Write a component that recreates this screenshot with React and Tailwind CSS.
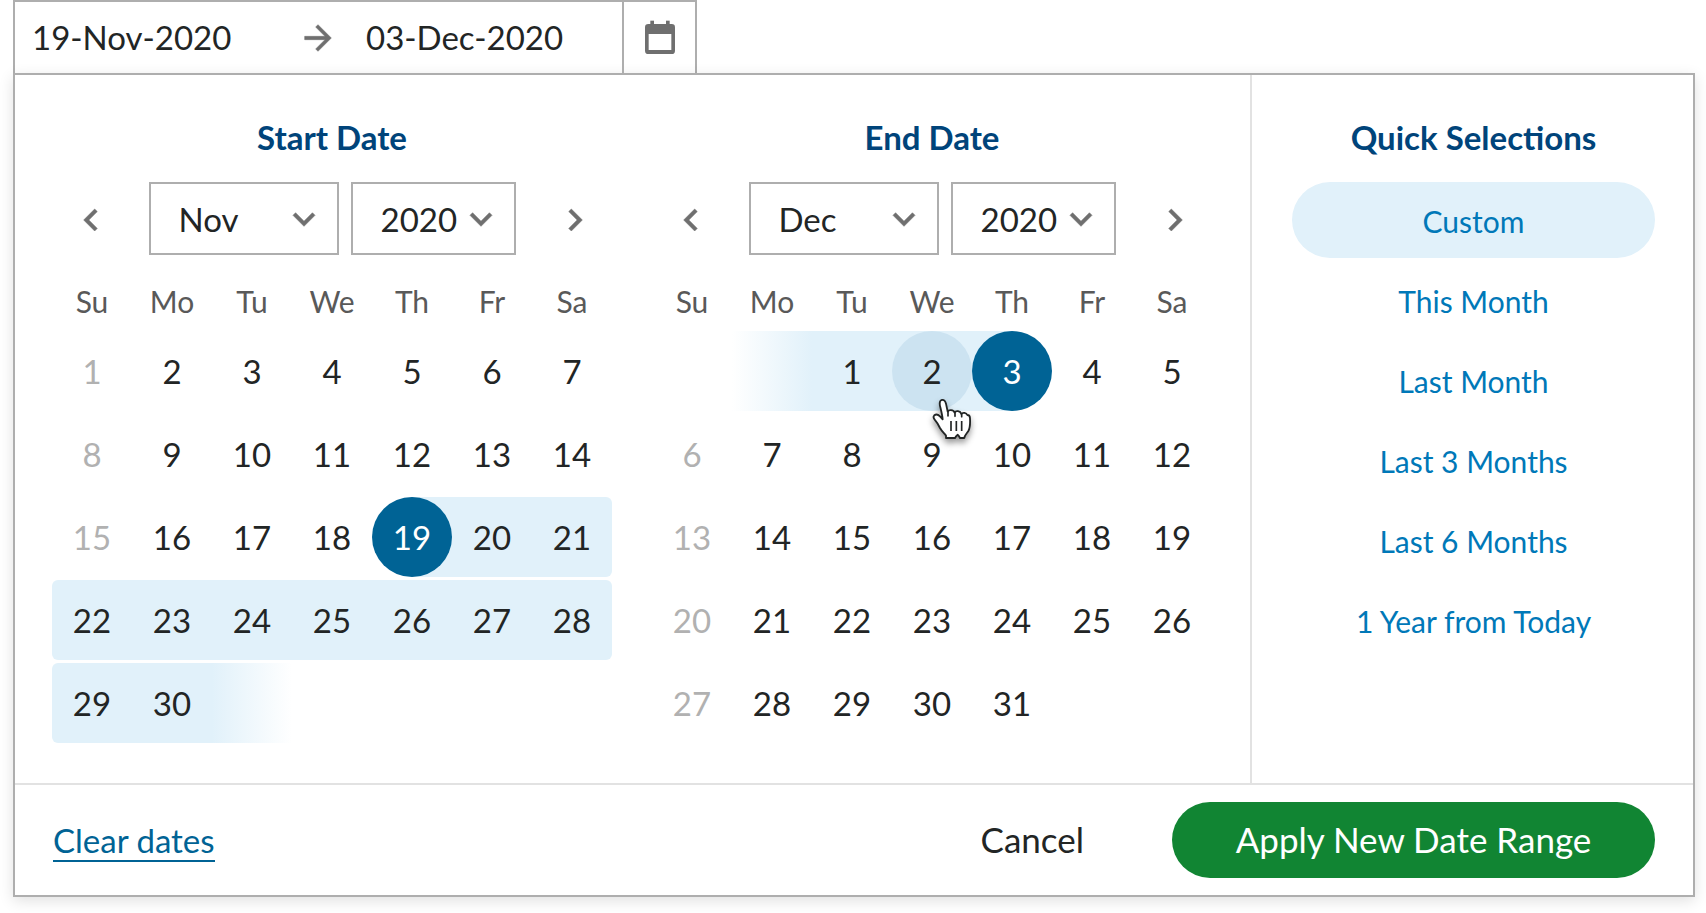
const MONTHS = ["Jan", "Feb", "Mar", "Apr", "May", "Jun", "Jul", "Aug", "Sep", "Oct", "Nov", "Dec"];
const YEARS = ["2019", "2020", "2021"];
const WEEKDAYS = ["Su", "Mo", "Tu", "We", "Th", "Fr", "Sa"];
const QUICK = ["Custom", "This Month", "Last Month", "Last 3 Months", "Last 6 Months", "1 Year from Today"];

const CELL_FILL = {
  range: "bg-[#e1f1fa]",
  rowStart: "bg-[#e1f1fa] rounded-l-md",
  rowEnd: "bg-[#e1f1fa] rounded-r-md",
  rightHalf: "bg-[linear-gradient(to_right,transparent_50%,#e1f1fa_50%)]",
  leftHalf: "bg-[linear-gradient(to_right,#e1f1fa_50%,transparent_50%)]",
  fadeOut: "bg-[linear-gradient(to_right,#e1f1fa,#ffffff)]",
  fadeIn: "bg-[linear-gradient(to_left,#e1f1fa,#ffffff)]",
};

const DAY_STYLE = {
  normal: "text-[#222525]",
  muted: "text-[#b1b1b1]",
  selected: "bg-[#006395] text-white",
  hovered: "bg-[#cce3f1] text-[#222525]",
};

function Icon({ d, className, strokeWidth = 0.3 }) {
  return (
    <svg
      viewBox="0 0 24 24"
      className={className}
      fill="currentColor"
      stroke="currentColor"
      strokeWidth={strokeWidth}
      aria-hidden="true"
    >
      <path d={d} />
    </svg>
  );
}

const CHEVRON_LEFT = "M15.41 7.41 14 6l-6 6 6 6 1.41-1.41L10.83 12z";
const CHEVRON_RIGHT = "M10 6 8.59 7.41 13.17 12l-4.58 4.59L10 18l6-6z";
const CHEVRON_DOWN = "M16.59 8.59 12 13.17 7.41 8.59 6 10l6 6 6-6z";
const ARROW = "M12 4l-1.41 1.41L16.17 11H4v2h12.17l-5.58 5.59L12 20l8-8z";

function CalendarIcon() {
  return (
    <svg viewBox="0 0 24 24" className="size-10" aria-hidden="true">
      <rect x="3" y="3" width="18" height="18" rx="2" fill="currentColor" />
      <rect x="6.2" y="1" width="2.2" height="3" fill="currentColor" />
      <rect x="15.6" y="1" width="2.2" height="3" fill="currentColor" />
      <rect x="5.2" y="9" width="13.6" height="9.6" fill="#ffffff" />
    </svg>
  );
}

function HandPointer() {
  return (
    <svg
      viewBox="97 55 120 126"
      className="pointer-events-none absolute top-[67px] left-[40px] z-10 h-[42px] w-[40px] overflow-visible drop-shadow-[0_4px_3px_rgba(0,0,0,0.4)]"
      aria-hidden="true"
    >
      <path
        d="M139 175v-7c-6-8-13-14-18-23-5-10-9-17-16-25-4-5-4-10-1-13 5-4 12-2 17 3l8 9c-1-11-4-24-7-36-3-11-2-20 4-22 7-2 11 3 13 11l5 24c2-6 18-7 21 3 3-7 17-6 20 4 4-6 15-4 18 3 4 0 8 3 8 10 1 17 0 29-5 38-5 8-11 12-12 21h-13c-2-4-4-8-7-10-3 2-6 6-8 10z"
        fill="#ffffff"
        stroke="#222525"
        strokeWidth="5.5"
        strokeLinejoin="round"
      />
      <path d="M145 96v13M166 99v11M186 103v8" stroke="#222525" strokeWidth="5" strokeLinecap="round" />
      <path d="M154 124v30M170 124v30M186 124v30" stroke="#222525" strokeWidth="5" />
    </svg>
  );
}

function Picker({ label, value, options, className }) {
  return (
    <div className={`relative ${className}`}>
      <select
        aria-label={label}
        defaultValue={value}
        className="h-[73px] w-full appearance-none border-2 border-[#aeaeae] bg-white pt-[3px] pl-7 text-[33px] text-[#222525]"
      >
        {options.map((o) => (
          <option key={o}>{o}</option>
        ))}
      </select>
      <div className="pointer-events-none absolute inset-y-0 right-[13px] flex items-center">
        <Icon d={CHEVRON_DOWN} className="size-11 text-[#6f6f6f]" />
      </div>
    </div>
  );
}

function Calendar({ title, month, weeks, fill, state }) {
  return (
    <section className="flex-1">
      <h2 className="text-center text-[33px] leading-[38px] font-bold text-[#00447a]">{title}</h2>
      <div className="mt-[26px] flex justify-between">
        <button
          aria-label={`${title}: previous month`}
          className="flex w-20 items-center justify-center pt-[2px] pr-[2px] text-[#6f6f6f]"
        >
          <Icon d={CHEVRON_LEFT} className="size-11" />
        </button>
        <div className="flex gap-3">
          <Picker label={`${title} month`} value={month} options={MONTHS} className="w-[190px]" />
          <Picker label={`${title} year`} value="2020" options={YEARS} className="w-[165px]" />
        </div>
        <button
          aria-label={`${title}: next month`}
          className="flex w-20 items-center justify-center pt-[2px] pl-[5px] text-[#6f6f6f]"
        >
          <Icon d={CHEVRON_RIGHT} className="size-11" />
        </button>
      </div>
      <table className="mt-[14px] w-full table-fixed border-separate border-spacing-x-0 border-spacing-y-[3px]">
        <thead>
          <tr>
            {WEEKDAYS.map((d) => (
              <th key={d} className="h-14 p-0 pt-[2px] text-[30px] font-normal text-[#595959]">
                {d}
              </th>
            ))}
          </tr>
        </thead>
        <tbody>
          {weeks.map((week, r) => (
            <tr key={r}>
              {week.map((day, c) => (
                <td key={c} className={`h-20 p-0 ${CELL_FILL[fill[`${r}-${c}`]] || ""}`}>
                  {day && (
                    <div className="relative mx-auto size-20">
                      <button
                        className={`size-20 rounded-full pt-[2px] text-[33px] ${
                          DAY_STYLE[state[day] || (c === 0 && !fill[`${r}-${c}`] ? "muted" : "normal")]
                        }`}
                      >
                        {day}
                      </button>
                      {state[day] === "hovered" && <HandPointer />}
                    </div>
                  )}
                </td>
              ))}
            </tr>
          ))}
        </tbody>
      </table>
    </section>
  );
}

function buildWeeks(offset, count) {
  return Array.from({ length: 5 }, (_, r) =>
    Array.from({ length: 7 }, (_, c) => {
      const day = r * 7 + c + 1 - offset;
      return day > 0 && day <= count ? day : null;
    })
  );
}

const NOV_FILL = {
  "2-4": "rightHalf",
  "2-5": "range",
  "2-6": "rowEnd",
  "3-0": "rowStart",
  "3-1": "range",
  "3-2": "range",
  "3-3": "range",
  "3-4": "range",
  "3-5": "range",
  "3-6": "rowEnd",
  "4-0": "rowStart",
  "4-1": "range",
  "4-2": "fadeOut",
};

const DEC_FILL = { "0-1": "fadeIn", "0-2": "range", "0-3": "range", "0-4": "leftHalf" };

export default function App() {
  return (
    <main className="bg-white pr-[11px] pb-4 pl-[13px] font-['Lato',sans-serif] text-[#222525]">
      <div className="flex h-[73px] w-[684px] border-x-2 border-t-2 border-[#aeaeae]">
        <div className="flex flex-1 items-center pl-[17px]">
          <input aria-label="Start date" defaultValue="19-Nov-2020" className="w-[266px] text-[33px] outline-none" />
          <Icon d={ARROW} className="size-10 shrink-0 text-[#6f6f6f]" />
          <input aria-label="End date" defaultValue="03-Dec-2020" className="ml-[28px] w-60 text-[33px] outline-none" />
        </div>
        <button
          aria-label="Open calendar"
          className="flex w-[73px] items-center justify-center border-l-2 border-[#aeaeae] pt-[3px] text-[#6f6f6f]"
        >
          <CalendarIcon />
        </button>
      </div>

      <div className="border-2 border-[#aeaeae] bg-white shadow-[0_4px_14px_rgba(0,0,0,0.12)]">
        <div className="flex border-b-2 border-[#e2e2e2]">
          <div className="flex flex-1 gap-10 pt-[43px] pr-[38px] pb-[37px] pl-[37px]">
            <Calendar title="Start Date" month="Nov" weeks={buildWeeks(0, 30)} fill={NOV_FILL} state={{ 19: "selected" }} />
            <Calendar
              title="End Date"
              month="Dec"
              weeks={buildWeeks(2, 31)}
              fill={DEC_FILL}
              state={{ 2: "hovered", 3: "selected" }}
            />
          </div>
          <aside className="w-[443px] border-l-2 border-[#e2e2e2] pt-[43px] pr-[38px] pl-10">
            <h2 className="text-center text-[33px] leading-[38px] font-bold text-[#00447a]">Quick Selections</h2>
            <div className="mt-[26px] flex flex-col gap-1">
              {QUICK.map((q) => (
                <button
                  key={q}
                  className={`h-[76px] rounded-full pt-[2px] text-[30px] text-[#0078b8] ${q === "Custom" ? "bg-[#e1f1fa]" : ""}`}
                >
                  {q}
                </button>
              ))}
            </div>
          </aside>
        </div>
        <footer className="flex items-center px-[38px] py-[17px]">
          <a href="#clear" className="mt-[2px] border-b-2 border-[#006395] text-[33px] leading-10 text-[#006395]">
            Clear dates
          </a>
          <button className="mr-[88px] ml-auto pb-[2px] text-[35px]">Cancel</button>
          <button className="h-[76px] w-[483px] rounded-full bg-[#118533] pb-[2px] text-[35px] text-white">
            Apply New Date Range
          </button>
        </footer>
      </div>
    </main>
  );
}
